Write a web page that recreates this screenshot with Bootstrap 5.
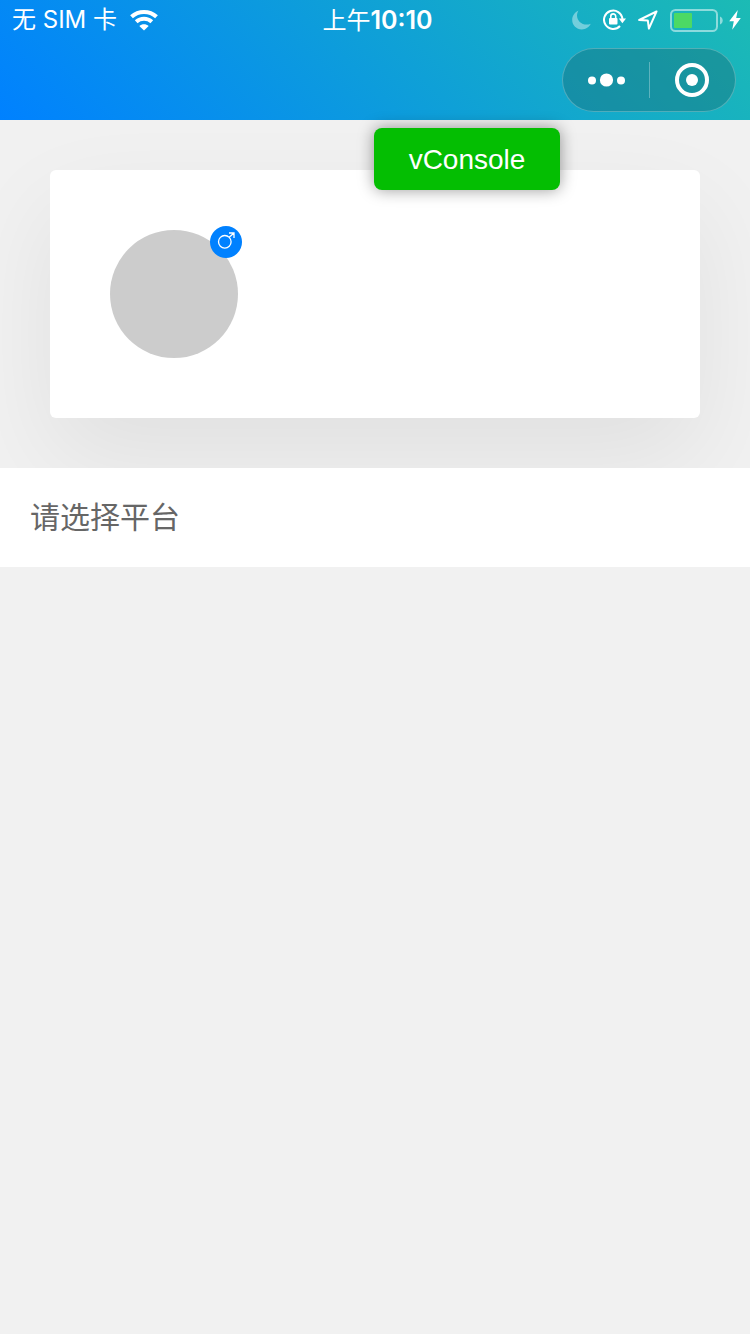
<!DOCTYPE html>
<html lang="zh-CN">
<head>
<meta charset="utf-8">
<meta name="viewport" content="width=device-width, initial-scale=1">
<title>选择平台</title>
<link href="https://cdn.jsdelivr.net/npm/bootstrap@5.3.0/dist/css/bootstrap.min.css" rel="stylesheet">
<style>
  body { background: #f1f1f1; font-family: Inter, "Noto Sans CJK SC", sans-serif; }
  svg { display: block; flex: none; }
  .app-header { background: linear-gradient(45deg, #0081ff, #1cbbb4); height: 120px; z-index: 2; }
  .status-bar { height: 40px; padding: 0 9px 0 12px; font-size: 24px; line-height: 42px; }
  .status-side { flex: 1 1 0; }
  .status-time { font-weight: 600; font-size: 25px; padding-left: 2px; }
  .status-time span { font-weight: 400; font-size: 24px; }
  .status-icons { gap: 12px; }
  .power { gap: 6px; }
  .capsule { width: 174px; height: 64px; margin: 8px 14px 0 0; border: 1px solid rgba(255,255,255,.25); border-radius: 32px; background: rgba(24,104,112,.4); }
  .capsule button { flex: 1 1 0; border: 0; background: none; padding: 0; color: #fff; }
  .capsule-line { width: 1px; height: 36px; background: rgba(255,255,255,.3); }
  .vconsole { top: 128px; right: 190px; z-index: 3; min-width: 186px; height: 62px; border: 0; border-radius: 8px; background: #04be02; color: #fff; font: 28px/32px "Liberation Sans", Arial, sans-serif; padding: 2px 20px 0; box-shadow: 0 0 16px rgba(0,0,0,.4); }
  .profile-area { padding: 50px; }
  .profile-card { padding: 60px; border-radius: 6px; box-shadow: 0 40px 100px rgba(0,0,0,.07); }
  .avatar { width: 128px; height: 128px; background: #ccc; }
  .gender { top: -4px; right: -4px; width: 32px; height: 32px; background: #0081ff; }
  .picker { min-height: 99px; padding: 0 30px; font-size: 30px; color: #666; z-index: 1; }
</style>
</head>
<body>
<header class="app-header position-relative text-white">
  <div class="status-bar d-flex align-items-center">
    <div class="status-side d-flex align-items-center">
      <span class="me-2 pe-1">无 SIM 卡</span>
      <svg width="30" height="22" viewBox="0 0 30 22" fill="none" stroke="#fff" stroke-width="4" aria-label="Wi-Fi">
        <path d="M2.5 7.8C9.5 1.3 20.5 1.3 27.5 7.8"/>
        <path d="M7.2 12.8C11.6 8.8 18.4 8.8 22.8 12.8"/>
        <path d="M10.3 17C13 14.5 17 14.5 19.7 17L15 21.5Z" fill="#fff" stroke="none"/>
      </svg>
    </div>
    <div class="status-time"><span>上午</span>10:10</div>
    <div class="status-side status-icons d-flex align-items-center justify-content-end">
      <svg width="19" height="20" viewBox="0 0 19 20" aria-label="勿扰"><path d="M6.500 .5C3 2 .2 5.500 .2 10c0 5.200 4.300 9.400 9.600 9.400 4 0 7.500-2.200 8.900-5.600-1.300.6-2.600.8-4 .8C9.300 14.600 5 10.500 5 5.500c0-1.800.5-3.500 1.500-5Z" fill="#fff" opacity=".4"/></svg>
      <svg width="23" height="22" viewBox="0 0 23 22" aria-label="方向锁定">
        <path d="M17 17A9.200 9.200 0 1 1 19.400 10" fill="none" stroke="#fff" stroke-width="2"/>
        <path d="M15.800 9.500h7.200l-3.600 4.800Z" fill="#fff"/>
        <rect x="6" y="9" width="8.500" height="6.500" rx="1" fill="#fff"/>
        <path d="M7.800 10V7.300a2.450 2.450 0 0 1 4.900 0V10" fill="none" stroke="#fff" stroke-width="1.600"/>
      </svg>
      <svg width="20" height="20" viewBox="0 0 20 20" aria-label="定位"><path d="M18.500 1.500L1.200 10l8.600.4 1.100 8.200Z" fill="none" stroke="#fff" stroke-width="2" stroke-linejoin="round"/></svg>
      <div class="power d-flex align-items-center">
        <svg width="53" height="24" viewBox="0 0 53 24" aria-label="电量">
          <rect x="1" y="2" width="46" height="21" rx="4.500" fill="none" stroke="#fff" stroke-width="2" opacity=".5"/>
          <rect x="4" y="5" width="18" height="15" rx="1" fill="#4cd964"/>
          <path d="M50 8.500c3.600 1.300 3.600 6.700 0 8Z" fill="#fff" opacity=".5"/>
        </svg>
        <svg width="12" height="20" viewBox="0 0 12 20" aria-label="充电中"><path d="M8.800 0L.2 11.200h4.600L3.200 19.800 11.800 8H7.200Z" fill="#fff"/></svg>
      </div>
    </div>
  </div>
  <div class="d-flex justify-content-end">
    <div class="capsule d-flex align-items-center">
      <button type="button" class="d-flex justify-content-center" aria-label="更多">
        <svg width="38" height="14" viewBox="0 0 38 14" fill="#fff"><circle cx="5" cy="7.500" r="4"/><circle cx="19.500" cy="7" r="6.600"/><circle cx="34" cy="7.500" r="4"/></svg>
      </button>
      <span class="capsule-line"></span>
      <button type="button" class="d-flex justify-content-center" aria-label="关闭">
        <svg width="34" height="34" viewBox="0 0 34 34"><circle cx="17" cy="17" r="15" fill="none" stroke="#fff" stroke-width="4"/><circle cx="17" cy="17" r="6" fill="#fff"/></svg>
      </button>
    </div>
  </div>
</header>

<button type="button" class="vconsole position-absolute">vConsole</button>

<main>
  <section class="profile-area">
    <div class="profile-card bg-white">
      <div class="avatar rounded-circle position-relative">
        <span class="gender position-absolute rounded-circle d-flex align-items-center justify-content-center">
          <svg width="18" height="20" viewBox="0 0 18 20" fill="none" stroke="#fff" stroke-width="1.300" aria-label="男"><circle cx="7.800" cy="9.800" r="6.300"/><path d="M12.200 5.300L17 1M12 1h5v5"/></svg>
        </span>
      </div>
    </div>
  </section>
  <button type="button" class="picker btn bg-white border-0 rounded-0 w-100 text-start position-relative">请选择平台</button>
</main>
<script src="https://cdn.jsdelivr.net/npm/bootstrap@5.3.0/dist/js/bootstrap.bundle.min.js"></script>
</body>
</html>
